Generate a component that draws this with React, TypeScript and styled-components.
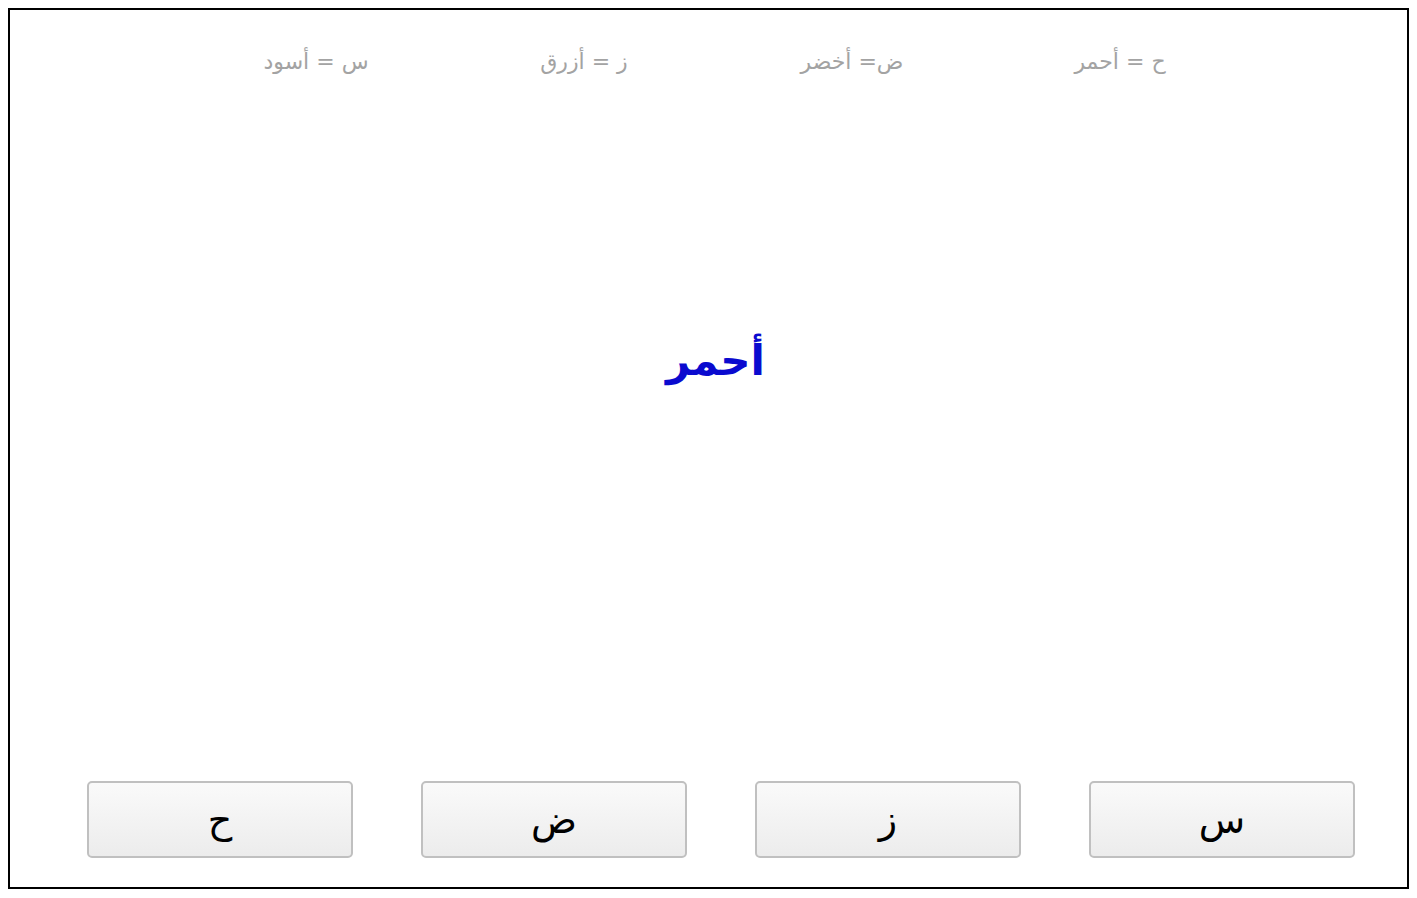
import React from "react";
import styled, { createGlobalStyle } from "styled-components";

const Global = createGlobalStyle`
  html, body { margin: 0; padding: 0; background: #ffffff; }
  body { padding: 8px; font-family: "DejaVu Sans", "Noto Sans", sans-serif; }
  * { box-sizing: border-box; }
`;

const Frame = styled.div`
  width: 1401px;
  height: 881px;
  border: 2px solid #000;
  background: #fff;
  display: flex;
  flex-direction: column;
  direction: rtl;
`;

const Legend = styled.div`
  display: grid;
  grid-template-columns: repeat(4, 268px);
  justify-content: start;
  margin-top: 32px;
  padding-right: 153px;
  height: 40px;
  align-items: center;
`;

const LegendItem = styled.div`
  text-align: center;
  color: #a3a3a3;
  font-family: "DejaVu Sans", sans-serif;
  font-size: 22px;
  line-height: 40px;
`;

const Stage = styled.div`
  flex: 1;
  display: flex;
  align-items: center;
  justify-content: center;
  padding-bottom: 142px;
  padding-left: 14px;
`;

const Word = styled.div<{ $color: string }>`
  color: ${(p) => p.$color};
  font-family: "DejaVu Sans", sans-serif;
  font-weight: bold;
  font-size: 42px;
`;

const Buttons = styled.div`
  display: grid;
  grid-template-columns: repeat(4, 266px);
  column-gap: 68px;
  justify-content: start;
  padding-right: 52px;
  margin-bottom: 29px;
`;

const Choice = styled.button`
  height: 77px;
  border: 2px solid #c0c0c0;
  border-radius: 5px;
  background: linear-gradient(#fafafa, #ececec);
  font-family: "DejaVu Sans", sans-serif;
  font-size: 38px;
  color: #000;
  display: flex;
  align-items: center;
  justify-content: center;
  padding: 0;
  cursor: pointer;
`;

const legend = ["ح = أحمر", "ض= أخضر", "ز = أزرق", "س = أسود"];
const choices = ["س", "ز", "ض", "ح"];

export default function App() {
  return (
    <>
      <Global />
      <Frame>
        <Legend>
          {legend.map((t) => (
            <LegendItem key={t}>{t}</LegendItem>
          ))}
        </Legend>
        <Stage>
          <Word $color="#0a0acf">أحمر</Word>
        </Stage>
        <Buttons>
          {choices.map((c) => (
            <Choice key={c}>{c}</Choice>
          ))}
        </Buttons>
      </Frame>
    </>
  );
}
